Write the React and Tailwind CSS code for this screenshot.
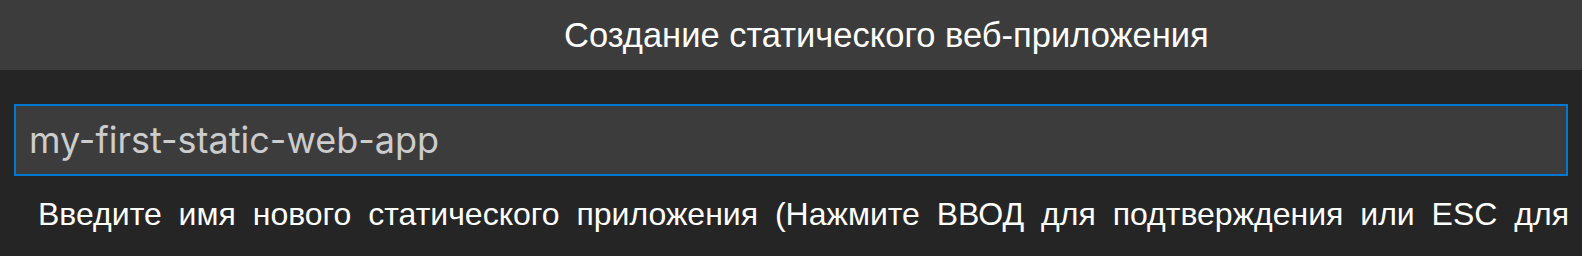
export default function App() {
  return (
    <div className="w-[1582px] h-[256px] overflow-hidden bg-[#252526]">
      <div className="h-[70px] bg-[#3c3c3c] flex items-center pl-[564px]">
        <span className="text-[34.5px] leading-none text-white font-['Liberation_Sans',Arial,sans-serif] whitespace-nowrap">
          Создание статического веб-приложения
        </span>
      </div>
      <div className="px-[14px] pt-[34px]">
        <div className="h-[72px] border-2 border-[#0078d4] bg-[#3c3c3c] flex items-center pl-[13px]">
          <span className="text-[36px] leading-none text-[#cccccc] font-['Inter',sans-serif] whitespace-nowrap">
            my-first-static-web-app
          </span>
        </div>
      </div>
      <div className="pl-[38px] pt-[22px] leading-none whitespace-nowrap text-[32px] text-white font-['Liberation_Sans',Arial,sans-serif] [word-spacing:8px]">
        Введите имя нового статического приложения (Нажмите ВВОД для подтверждения или ESC для отмены)
      </div>
    </div>
  );
}
